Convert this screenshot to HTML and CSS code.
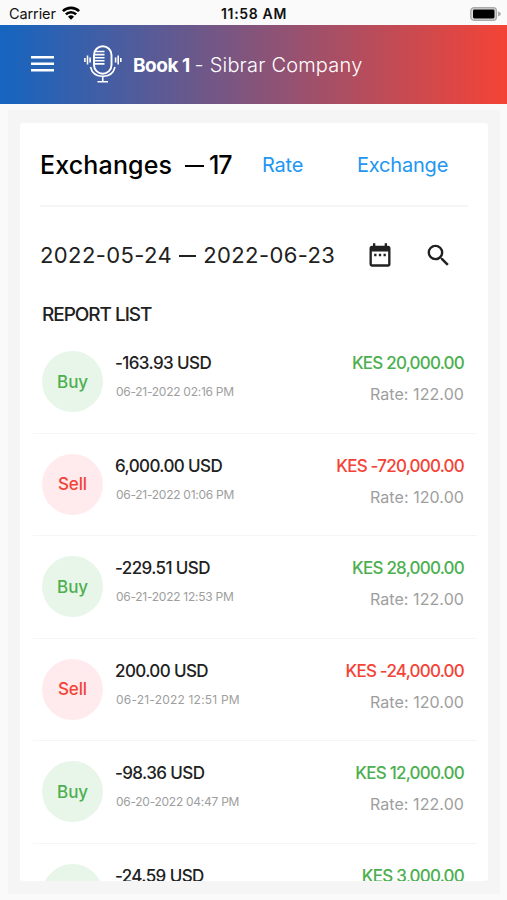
FILE: index.html
```html
<!DOCTYPE html>
<html lang="en">
<head>
<meta charset="utf-8">
<title>Exchanges</title>
<link rel="stylesheet" href="styles.css">
</head>
<body>
<div class="status">
  <div class="carrier"><span>Carrier</span>
    <svg width="18" height="14" viewBox="0 0 18 14"><g fill="none" stroke="#000" stroke-width="2.6"><path d="M.9 5.2a11.5 11.5 0 0 1 16.2 0"/><path d="M3.9 8.4a7.2 7.2 0 0 1 10.2 0"/></g><path d="M9 13.8 6 10.7a4.3 4.3 0 0 1 6 0z"/></svg>
  </div>
  <div class="clock">11:58 AM</div>
  <svg class="battery" width="31" height="14" viewBox="0 0 31 14"><rect x=".8" y=".8" width="25.6" height="12.4" rx="3.2" fill="#ddd" stroke="#aaa" stroke-width="1.4"/><rect x="3" y="2.6" width="21.5" height="8.8" rx="1.3"/><path d="M28 4.6q3 1 3 2.4t-3 2.4z" fill="#aaa"/></svg>
</div>
<header class="bar">
  <svg class="menu" width="23" height="16" viewBox="0 0 23 16"><path d="M0 1.3h23M0 7.8h23M0 14.3h23" stroke="#fff" stroke-width="2.6"/></svg>
  <svg class="mic" width="38" height="38" viewBox="0 0 38 38" fill="none" stroke="#fff" stroke-width="1.6"><rect x="10" y="1.200" width="17.500" height="27.500" rx="8.750" stroke-width="1.900"/><path d="M10.500 6.500h10M10.500 9.600h10M10.500 12.700h10M10.500 15.800h10M10.500 18.900h10"/><path d="M6.500 22c1.500 6.300 6 9.300 12.250 9.300S29.500 28.300 31 22M18.750 31.500v5M13.500 36.700h10.500M.9 13v4M3.500 10.500v9M6.100 12.500v5M36.800 13v4M34.200 10.500v9M31.600 12.500v5"/></svg>
  <div class="title"><b>Book 1</b><span class="company">- Sibrar Company</span></div>
</header>
<main class="frame">
  <section class="card">
    <div class="heading"><h1><span>Exchanges</span><i class="dash"></i><span class="count">17</span></h1><a class="rate-link">Rate</a><a class="exchange-link">Exchange</a></div>
    <div class="filter">
      <div class="dates"><span>2022-05-24</span><i class="dash thin"></i><span>2022-06-23</span></div>
      <svg class="calendar" width="28" height="28" viewBox="0 0 24 24" fill="#212121"><path d="M9 11H7v2h2zm4 0h-2v2h2zm4 0h-2v2h2zm2-7h-1V2h-2v2H8V2H6v2H5c-1.110 0-1.990.9-1.990 2L3 20a2 2 0 0 0 2 2h14c1.100 0 2-.9 2-2V6c0-1.100-.9-2-2-2zm0 16H5V9h14z"/></svg>
      <svg class="search" width="29" height="29" viewBox="0 0 24 24" fill="#212121"><path d="M15.500 14h-.79l-.28-.27A6.471 6.471 0 0 0 16 9.500 6.500 6.500 0 1 0 9.500 16c1.610 0 3.090-.59 4.230-1.570l.27.28v.79l5 4.990L20.490 19zm-6 0C7.010 14 5 11.990 5 9.500S7.010 5 9.500 5 14 7.010 14 9.500 11.990 14 9.500 14z"/></svg>
    </div>
    <h2>REPORT LIST</h2>
    <div class="list">
      <article class="row buy"><div class="badge">Buy</div><div class="info"><b>-163.93 USD</b><small>06-21-2022 02:16 PM</small></div><div class="value"><b>KES 20,000.00</b><span>Rate: 122.00</span></div></article>
      <article class="row sell"><div class="badge">Sell</div><div class="info"><b>6,000.00 USD</b><small>06-21-2022 01:06 PM</small></div><div class="value"><b>KES -720,000.00</b><span>Rate: 120.00</span></div></article>
      <article class="row buy"><div class="badge">Buy</div><div class="info"><b>-229.51 USD</b><small>06-21-2022 12:53 PM</small></div><div class="value"><b>KES 28,000.00</b><span>Rate: 122.00</span></div></article>
      <article class="row sell"><div class="badge">Sell</div><div class="info"><b>200.00 USD</b><small class="roomy">06-21-2022 12:51 PM</small></div><div class="value"><b>KES -24,000.00</b><span>Rate: 120.00</span></div></article>
      <article class="row buy"><div class="badge">Buy</div><div class="info"><b>-98.36 USD</b><small>06-20-2022 04:47 PM</small></div><div class="value"><b>KES 12,000.00</b><span>Rate: 122.00</span></div></article>
      <article class="row buy"><div class="badge"></div><div class="info"><b>-24.59 USD</b></div><div class="value"><b>KES 3,000.00</b></div></article>
    </div>
  </section>
</main>
</body>
</html>
```
FILE: styles.css
```css
* { box-sizing: border-box; }
body { margin: 0; width: 507px; height: 900px; overflow: hidden; background: #fafafa; color: #212121; font-family: Inter, "Liberation Sans", sans-serif; }
svg { display: block; flex: none; }
.status { height: 25px; display: grid; grid-template-columns: 1fr auto 1fr; align-items: center; padding: 2px 6px 0 9px; color: #111; font-size: 14.5px; line-height: 22px; }
.carrier { display: flex; gap: 6px; align-items: center; letter-spacing: -.1px; }
.carrier svg { margin-top: -2px; }
.clock { margin-right: 2px; font-weight: 600; font-size: 14px; letter-spacing: .65px; }
.battery { justify-self: end; }
.bar { height: 78.500px; display: flex; align-items: center; padding-left: 31px; background: linear-gradient(90deg, #1565c0, #f44336); color: #fff; }
.mic { margin-left: 30px; }
.title { margin: 2px 0 0 11px; display: flex; gap: 5px; font-size: 19px; white-space: nowrap; }
.title b { font-weight: 700; letter-spacing: -.5px; }
.company { font-size: 20px; line-height: 23px; font-weight: 300; letter-spacing: .2px; }
.frame { margin: 6px 7px 0 8px; height: 784px; padding: 13.500px 12px 12px; background: #f5f5f5; }
.card { height: 758px; overflow: hidden; border-radius: 3px; background: #fff; }
.heading { display: flex; align-items: center; height: 84px; padding-top: 1px; margin: 0 20px; border-bottom: 2px solid #f5f5f5; }
h1 { margin: 0; width: 222px; display: flex; align-items: center; font-size: 25px; font-weight: 500; letter-spacing: 0; color: #000; white-space: nowrap; }
h1 span:first-child { width: 132px; letter-spacing: .15px; }
.count { letter-spacing: -1.200px; }
.dash { flex: none; width: 19px; height: 2px; margin: 2px 5px 0 13px; background: currentColor; }
.thin { width: 17px; height: 1.500px; margin: 2px 7px 0; }
.heading a { color: #2196f3; font-size: 20px; letter-spacing: -.2px; }
.rate-link { width: 95px; }
.filter { display: flex; align-items: center; height: 28px; margin: 34px 20px 0; }
.dates { width: 326px; display: flex; align-items: center; font-size: 22px; letter-spacing: .4px; white-space: nowrap; }
.search { margin-left: 30px; }
h2 { margin: 32px 22px 0; font-size: 19px; line-height: 28px; font-weight: 500; letter-spacing: -1.050px; }
.list { margin: 2px 11px 0 13px; }
.row { height: 102.600px; display: flex; align-items: flex-start; padding: 20px 13px 0 9px; border-bottom: 1.500px solid #f5f5f5; }
.badge { flex: none; width: 61px; height: 61px; border-radius: 50%; display: flex; align-items: center; justify-content: center; font-size: 17px; font-weight: 500; letter-spacing: -.1px; }
.info { margin-left: 12px; flex: 1; display: flex; flex-direction: column; white-space: nowrap; }
.info b { font-size: 17px; line-height: 24px; font-weight: 500; letter-spacing: -.6px; }
.info small { margin: 8px 0 0 1px; font-size: 12px; line-height: 18px; letter-spacing: -.27px; color: #9e9e9e; }
.info small.roomy { letter-spacing: .2px; }
.value { display: flex; flex-direction: column; text-align: right; white-space: nowrap; }
.value b { font-size: 17px; line-height: 24px; font-weight: 500; letter-spacing: -.78px; }
.value span { margin-top: 7px; font-size: 16px; line-height: 24px; letter-spacing: .08px; color: #9e9e9e; }
.buy .badge { background: #e8f5e9; color: #4caf50; }
.sell .badge { background: #ffebee; color: #f44336; }
.buy .value b { color: #4caf50; }
.sell .value b { color: #f44336; }
```
